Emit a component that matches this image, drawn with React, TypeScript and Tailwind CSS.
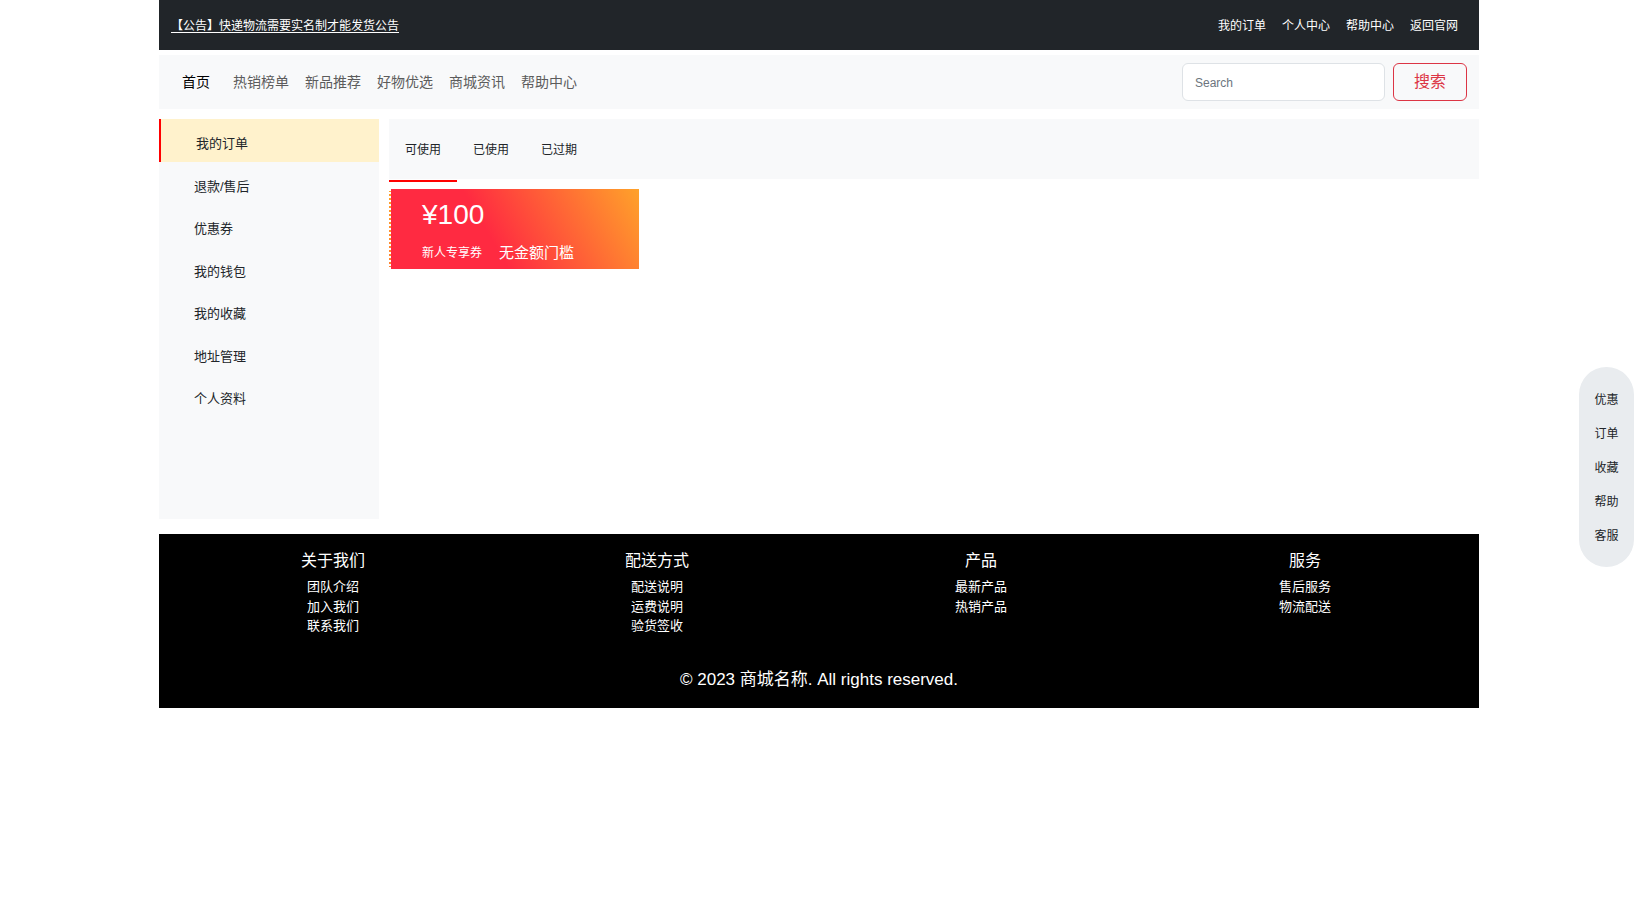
const navLinks = ["热销榜单", "新品推荐", "好物优选", "商城资讯", "帮助中心"];
const topLinks = ["我的订单", "个人中心", "帮助中心", "返回官网"];
const menu = ["我的订单", "退款/售后", "优惠券", "我的钱包", "我的收藏", "地址管理", "个人资料"];
const tabs = ["可使用", "已使用", "已过期"];
const floatLinks = ["优惠", "订单", "收藏", "帮助", "客服"];

const footerCols = [
  { title: "关于我们", links: ["团队介绍", "加入我们", "联系我们"] },
  { title: "配送方式", links: ["配送说明", "运费说明", "验货签收"] },
  { title: "产品", links: ["最新产品", "热销产品"] },
  { title: "服务", links: ["售后服务", "物流配送"] },
];

export default function App() {
  return (
    <div className="min-h-screen bg-white font-['Liberation_Sans','Noto_Sans_CJK_SC',sans-serif] text-[#212529]">
      <div className="mx-auto w-[1320px]">
        {/* top bar */}
        <div className="flex h-[50px] items-center justify-between bg-[#212529] pl-3 pr-[21px] pt-[2px] text-[12px] text-white">
          <a href="#" className="underline underline-offset-2">
            【公告】快递物流需要实名制才能发货公告
          </a>
          <div className="flex gap-4">
            {topLinks.map((t) => (
              <a key={t} href="#">
                {t}
              </a>
            ))}
          </div>
        </div>

        {/* nav */}
        <div className="mt-[5px] flex h-[54px] items-center bg-[#f8f9fa] pl-[23px] pr-3">
          <a href="#" className="mr-[23px] text-[14px] text-black">
            首页
          </a>
          <div className="flex gap-4 text-[14px] text-[#5c5c5c]">
            {navLinks.map((t) => (
              <a key={t} href="#">
                {t}
              </a>
            ))}
          </div>
          <div className="ml-auto flex items-center gap-2">
            <input
              type="text"
              placeholder="Search"
              className="h-[38px] w-[203px] rounded-md border border-[#dee2e6] bg-white px-3 pt-px text-[12px] outline-none placeholder:text-[#6c757d]"
            />
            <button className="h-[38px] w-[74px] rounded-md border border-[#dc3545] text-[16px] text-[#dc3545]">
              搜索
            </button>
          </div>
        </div>

        {/* content */}
        <div className="mt-[10px] flex">
          <div className="min-h-[400px] w-[220px] bg-[#f8f9fa]">
            {menu.map((m, i) => (
              <div
                key={m}
                className={
                  i === 0
                    ? "h-[42.5px] border-l-2 border-[#ff0000] bg-[#fff2cc] pl-[35px] pt-[15px] text-[13px] leading-[20px]"
                    : "h-[42.5px] pl-[35px] pt-[15px] text-[13px] leading-[20px]"
                }
              >
                {m}
              </div>
            ))}
          </div>

          <div className="ml-[10px] flex-1">
            <div className="flex h-[60px] items-center bg-[#f8f9fa] pt-[2px]">
              {tabs.map((t) => (
                <div key={t} className="px-4 text-[12px]">
                  {t}
                </div>
              ))}
            </div>
            <div className="mt-px h-[2px] w-[68px] bg-[#ff0000]" />

            <div className="mt-[7px] h-[80px] w-[250px] border-l-2 border-dotted border-white bg-[linear-gradient(60deg,#ff2a41_40%,#ffa22a)] pl-[31px] pt-[10px] text-white">
              <div className="text-[28px] leading-[32px]">¥100</div>
              <div className="mt-[12px] flex items-center gap-[17px] leading-[20px]">
                <span className="text-[12px]">新人专享券</span>
                <span className="text-[15px]">无金额门槛</span>
              </div>
            </div>
          </div>
        </div>

        {/* footer */}
        <footer className="mt-[15px] bg-black px-3 pb-[15px] pt-[15px] text-center text-white">
          <div className="grid grid-cols-4">
            {footerCols.map((c) => (
              <div key={c.title}>
                <div className="mb-1 text-[16px] leading-[24px]">{c.title}</div>
                {c.links.map((l) => (
                  <div key={l} className="text-[13px] leading-[19.5px]">
                    {l}
                  </div>
                ))}
              </div>
            ))}
          </div>
          <div className="mt-[31px] text-[17px] leading-[26px]">© 2023 商城名称. All rights reserved.</div>
        </footer>
      </div>

      {/* floating side bar */}
      <div className="fixed right-[4px] top-[367px] flex h-[200px] w-[55px] flex-col items-center rounded-full bg-[#e9ecef] pt-4 text-[12px]">
        {floatLinks.map((f) => (
          <div key={f} className="leading-[34px]">
            {f}
          </div>
        ))}
      </div>
    </div>
  );
}
